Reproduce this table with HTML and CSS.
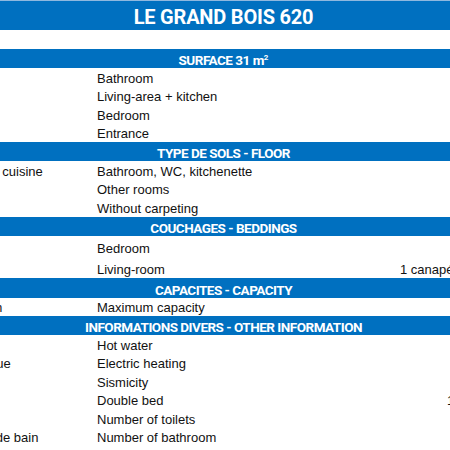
FILE: index.html
```html
<!DOCTYPE html>
<html lang="fr">
<head>
<meta charset="utf-8">
<title>Le Grand Bois 620</title>
<link rel="stylesheet" href="styles.css">
</head>
<body>
<div class="viewport">
  <div class="sheet">
    <div class="row title"><div class="band-cell">LE GRAND BOIS 620</div></div>
    <div class="row blank"></div>

    <div class="row band"><div class="band-cell">SURFACE 31 m<sup>2</sup></div></div>
    <div class="row r185"><div class="c1">Salle de bain</div><div class="c2">Bathroom</div><div class="c3"></div><div class="c4"></div></div>
    <div class="row r185"><div class="c1">Séjour + cuisine</div><div class="c2">Living-area + kitchen</div><div class="c3"></div><div class="c4"></div></div>
    <div class="row r185"><div class="c1">Chambre</div><div class="c2">Bedroom</div><div class="c3"></div><div class="c4"></div></div>
    <div class="row r185"><div class="c1">Entrée</div><div class="c2">Entrance</div><div class="c3"></div><div class="c4"></div></div>

    <div class="row band"><div class="band-cell">TYPE DE SOLS - FLOOR</div></div>
    <div class="row r185"><div class="c1">Salle de bain, WC, cuisine</div><div class="c2">Bathroom, WC, kitchenette</div><div class="c3"></div><div class="c4"></div></div>
    <div class="row r185"><div class="c1">Autres pièces</div><div class="c2">Other rooms</div><div class="c3"></div><div class="c4"></div></div>
    <div class="row r185"><div class="c1">Sans moquette</div><div class="c2">Without carpeting</div><div class="c3"></div><div class="c4"></div></div>

    <div class="row band band-195"><div class="band-cell">COUCHAGES - BEDDINGS</div></div>
    <div class="row r205"><div class="c1">Chambre</div><div class="c2">Bedroom</div><div class="c3"></div><div class="c4"></div></div>
    <div class="row r21"><div class="c1">Séjour</div><div class="c2">Living-room</div><div class="c3">1 canapé-lit</div><div class="c4"></div></div>

    <div class="row band band-20"><div class="band-cell">CAPACITES - CAPACITY</div></div>
    <div class="row r18"><div class="c1">Capacité maximum</div><div class="c2">Maximum capacity</div><div class="c3"></div><div class="c4"></div></div>

    <div class="row band band-195"><div class="band-cell">INFORMATIONS DIVERS - OTHER INFORMATION</div></div>
    <div class="row r185"><div class="c1">Eau chaude</div><div class="c2">Hot water</div><div class="c3"></div><div class="c4"></div></div>
    <div class="row r185"><div class="c1">Chauffage électrique</div><div class="c2">Electric heating</div><div class="c3"></div><div class="c4"></div></div>
    <div class="row r185"><div class="c1">Sismicité</div><div class="c2">Sismicity</div><div class="c3"></div><div class="c4"></div></div>
    <div class="row r185"><div class="c1">Lit double</div><div class="c2">Double bed</div><div class="c3"></div><div class="c4">1 lit 140x190</div></div>
    <div class="row r185"><div class="c1">Nombre de WC</div><div class="c2">Number of toilets</div><div class="c3"></div><div class="c4"></div></div>
    <div class="row r185"><div class="c1">Nombre de salles de bain</div><div class="c2">Number of bathroom</div><div class="c3"></div><div class="c4"></div></div>
  </div>
</div>
</body>
</html>
```
FILE: styles.css
```css
html, body {
  margin: 0;
  padding: 0;
  background: #ffffff;
}

.viewport {
  width: 450px;
  height: 450px;
  overflow: hidden;
}

.sheet {
  width: 671px;
  margin-left: -112px;
  display: flex;
  flex-direction: column;
  font-family: "Liberation Sans", Arial, sans-serif;
  font-size: 13px;
  color: #111111;
}

.row {
  display: grid;
  grid-template-columns: 206px 303px 47px 115px;
  align-items: end;
}

.row > div {
  padding-left: 3px;
  line-height: 16px;
  white-space: nowrap;
  overflow: visible;
}

.c1 { overflow: hidden; }

.r18 { height: 18px; }
.r185 { height: 18.5px; }
.r205 { height: 20.5px; }
.r21 { height: 21px; }

.blank { height: 19px; }

.band {
  height: 19px;
  background: #0070c0;
  color: #ffffff;
  grid-template-columns: 1fr;
}
.band-195 { height: 19.5px; }
.band-20 { height: 20px; }

.band .band-cell,
.title .band-cell {
  padding-left: 0;
  text-align: center;
  font-family: Roboto, "Liberation Sans", sans-serif;
  font-weight: 700;
  font-size: 13.5px;
  letter-spacing: -0.5px;
}

.band sup {
  font-size: 8px;
  line-height: 0;
  vertical-align: 5px;
  letter-spacing: 0;
}

.title {
  height: 29px;
  background: #0070c0;
  border-top: 1px solid #8fb8df;
  color: #ffffff;
  grid-template-columns: 1fr;
}

.title .band-cell {
  font-size: 20px;
  line-height: 24px;
  padding-bottom: 1.5px;
  letter-spacing: -0.2px;
}
```
